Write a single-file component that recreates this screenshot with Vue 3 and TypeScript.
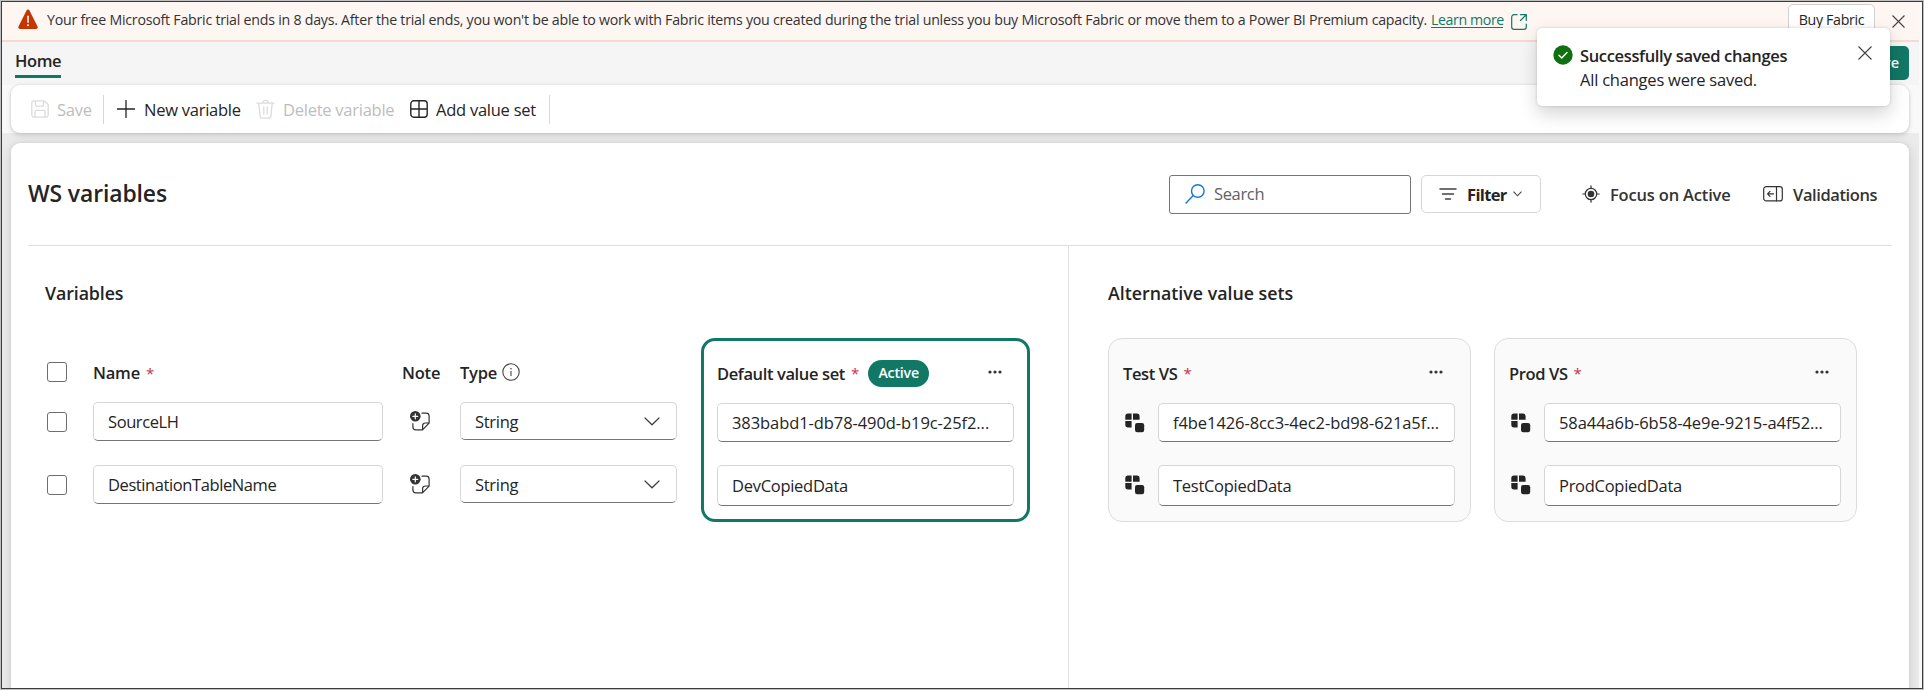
<script setup lang="ts">
import { ref } from 'vue'

interface Variable {
  name: string
  type: string
  value: string
}

interface ValueSet {
  title: string
  values: string[]
}

const search = ref('')

const variables: Variable[] = [
  { name: 'SourceLH', type: 'String', value: '383babd1-db78-490d-b19c-25f2...' },
  { name: 'DestinationTableName', type: 'String', value: 'DevCopiedData' },
]

const alternatives: ValueSet[] = [
  { title: 'Test VS', values: ['f4be1426-8cc3-4ec2-bd98-621a5f...', 'TestCopiedData'] },
  { title: 'Prod VS', values: ['58a44a6b-6b58-4e9e-9215-a4f52...', 'ProdCopiedData'] },
]

const isGuid = (value: string): boolean => value.includes('-')
</script>

<template>
  <div class="frame">
    <div class="window">
      <header class="banner">
        <svg class="warn" width="20" height="22" viewBox="0 0 20 22">
          <path d="M8.500 1.400a1.700 1.700 0 0 1 3 0l8 16.200a1.700 1.700 0 0 1-1.500 2.500H2a1.700 1.700 0 0 1-1.500-2.500z" fill="#c43501" />
          <path d="M10 7.200v6" stroke="#fff" stroke-width="1.500" stroke-linecap="round" />
          <circle cx="10" cy="16.200" r="1" fill="#fff" />
        </svg>
        <p class="banner-text">Your free Microsoft Fabric trial ends in 8 days. After the trial ends, you won't be able to work with Fabric items you created during the trial unless you buy Microsoft Fabric or move them to a Power BI Premium capacity.</p>
        <a class="learn">Learn more</a>
        <svg class="external" width="16" height="16" viewBox="0 0 16 16" fill="none" stroke="#117865" stroke-width="1.200" stroke-linecap="round">
          <path d="M6 .700H3A2.300 2.300 0 0 0 .700 3v10A2.300 2.300 0 0 0 3 15.300h10a2.300 2.300 0 0 0 2.300-2.300v-3M9.500.700h5.800v5.800M15 1 9.500 6.500" />
        </svg>
        <button class="buy">Buy Fabric</button>
        <svg class="banner-close" width="13" height="13" viewBox="0 0 13 13" stroke="#424242" stroke-width="1.100">
          <path d="m.5.5 12 12M12.500.5l-12 12" />
        </svg>
      </header>

      <nav class="tabs">
        <span class="tab">Home</span>
        <button class="share">Share</button>
      </nav>

      <div class="ribbon">
        <button class="tool save disabled">
          <svg width="18" height="18" viewBox="0 0 18 18" fill="none" stroke="currentColor" stroke-width="1.300">
            <path d="M3 .8h10.500L17.200 4.500V15a2.200 2.200 0 0 1-2.200 2.200H3A2.200 2.200 0 0 1 .8 15V3A2.200 2.200 0 0 1 3 .8ZM4.500.8v4.200c0 .8.400 1.200 1.200 1.200h5.600c.8 0 1.200-.4 1.200-1.200V.8M4 17v-5.500c0-.8.400-1.200 1.200-1.200h7.600c.8 0 1.200.4 1.200 1.200V17" />
          </svg>
          <span>Save</span>
        </button>
        <i class="sep"></i>
        <button class="tool create">
          <svg width="18" height="18" viewBox="0 0 18 18" stroke="#242424" stroke-width="1.300" stroke-linecap="round">
            <path d="M9 .5v17M.5 9h17" />
          </svg>
          <span>New variable</span>
        </button>
        <button class="tool delete disabled">
          <svg width="19" height="20" viewBox="0 0 19 20" fill="none" stroke="currentColor" stroke-width="1.300" stroke-linecap="round">
            <path d="M1 4.200h17M6.800 4a2.700 2.700 0 0 1 5.400 0M2.800 4.400l1.300 12.700a2.300 2.300 0 0 0 2.300 2.100h6.200a2.300 2.300 0 0 0 2.300-2.100l1.300-12.700M7.800 8v7M11.200 8v7" />
          </svg>
          <span>Delete variable</span>
        </button>
        <button class="tool add">
          <svg width="18" height="18" viewBox="0 0 18 18" fill="none" stroke="#242424" stroke-width="1.400">
            <rect x=".8" y=".8" width="16.400" height="16.400" rx="3" />
            <path d="M9 1v16M1 9h16" />
          </svg>
          <span>Add value set</span>
        </button>
        <i class="sep"></i>
      </div>

      <div class="stage">
        <main class="panel">
          <div class="panel-head">
            <h1>WS variables</h1>
            <label class="search">
              <svg width="20" height="20" viewBox="0 0 20 20" fill="none" stroke="#0f7bd4" stroke-width="1.400">
                <circle cx="12.800" cy="7" r="6.300" />
                <path d="M8.200 11.600.6 19.400" />
              </svg>
              <input v-model="search" type="text" placeholder="Search" />
            </label>
            <button class="filter">
              <svg width="18" height="12" viewBox="0 0 18 12" stroke="#424242" stroke-width="1.500" stroke-linecap="round">
                <path d="M1 1h16M3.500 6h11M6.500 11h5" />
              </svg>
              <span>Filter</span>
              <svg width="9" height="6" viewBox="0 0 9 6" fill="none" stroke="#424242" stroke-width="1.100">
                <path d="m.5.700 4 4.100 4-4.100" />
              </svg>
            </button>
            <button class="ghost focus">
              <svg width="18" height="18" viewBox="0 0 18 18" fill="none" stroke="#333" stroke-width="1.200" stroke-linecap="round">
                <circle cx="9" cy="9" r="5.700" />
                <circle cx="9" cy="9" r="3.300" fill="#333" stroke="none" />
                <path d="M9 .8v2.500M9 14.700v2.500M.8 9h2.500M14.700 9h2.500" />
              </svg>
              <span>Focus on Active</span>
            </button>
            <button class="ghost validations">
              <svg width="20" height="16" viewBox="0 0 20 16" fill="none" stroke="#333" stroke-width="1.200" stroke-linecap="round" stroke-linejoin="round">
                <rect x=".7" y=".7" width="18.600" height="14.200" rx="2.500" />
                <path d="M13.500.8v14M10.500 7.800H4.700M7 5.300 4.500 7.800 7 10.300" />
              </svg>
              <span>Validations</span>
            </button>
          </div>

          <div class="columns">
            <section class="left">
              <h2>Variables</h2>
              <div class="tables">
                <div class="grid">
                  <i class="check"></i>
                  <span class="label">Name<b class="star">*</b></span>
                  <span class="label note-label">Note</span>
                  <span class="label type-label">
                    Type
                    <svg width="18" height="18" viewBox="0 0 18 18" fill="none" stroke="#424242" stroke-width="1.100">
                      <circle cx="9" cy="9" r="8.200" />
                      <path d="M9 8v5" />
                      <circle cx="9" cy="5.700" r=".8" fill="#424242" stroke="none" />
                    </svg>
                  </span>
                  <template v-for="item in variables" :key="item.name">
                    <i class="check"></i>
                    <div class="field name">{{ item.name }}</div>
                    <svg class="note" width="20" height="20" viewBox="0 0 20 20" fill="none" stroke="#333" stroke-width="1.200" stroke-linecap="round" stroke-linejoin="round">
                      <circle cx="5.300" cy="5.300" r="5.300" fill="#333" stroke="none" />
                      <path d="M5.300 2.800v5M2.800 5.300h5" stroke="#fff" />
                      <path d="M12 2.200h4.200A2.900 2.900 0 0 1 19.100 5v7.200l-6.600 6.600H5.800A2.900 2.900 0 0 1 2.900 16v-3.300M19 12h-3.700a2.700 2.700 0 0 0-2.700 2.700v4" />
                    </svg>
                    <div class="field select">
                      {{ item.type }}
                      <svg width="16" height="9" viewBox="0 0 16 9" fill="none" stroke="#424242" stroke-width="1.200" stroke-linecap="round">
                        <path d="m1 1 7 6.800L15 1" />
                      </svg>
                    </div>
                  </template>
                </div>

                <article class="card active">
                  <div class="card-head">
                    <span class="card-title">Default value set</span>
                    <b class="star">*</b>
                    <span class="pill">Active</span>
                    <svg class="dots" width="14" height="4" viewBox="0 0 14 4" fill="#333">
                      <circle cx="2" cy="2" r="1.600" /><circle cx="7" cy="2" r="1.600" /><circle cx="12" cy="2" r="1.600" />
                    </svg>
                  </div>
                  <div v-for="item in variables" :key="item.name" class="card-row">
                    <div class="field" :class="{ guid: isGuid(item.value) }">{{ item.value }}</div>
                  </div>
                </article>
              </div>
            </section>

            <section class="right">
              <h2>Alternative value sets</h2>
              <div class="sets">
                <article v-for="set in alternatives" :key="set.title" class="card">
                  <div class="card-head">
                    <span class="card-title">{{ set.title }}</span>
                    <b class="star">*</b>
                    <svg class="dots" width="14" height="4" viewBox="0 0 14 4" fill="#333">
                      <circle cx="2" cy="2" r="1.600" /><circle cx="7" cy="2" r="1.600" /><circle cx="12" cy="2" r="1.600" />
                    </svg>
                  </div>
                  <div v-for="value in set.values" :key="value" class="card-row">
                    <svg width="20" height="20" viewBox="0 0 20 20" fill="#242424">
                      <path d="M3 .5h3.600v6.200H.3V3.200A2.700 2.700 0 0 1 3 .5ZM8 .5h3.900a2.700 2.700 0 0 1 2.700 2.700v3.500H8zM.3 8.100h6.300v6.300H3a2.700 2.700 0 0 1-2.700-2.700z" />
                      <rect x="10" y="10" width="9.200" height="9.200" rx="2.200" />
                    </svg>
                    <div class="field" :class="{ guid: isGuid(value) }">{{ value }}</div>
                  </div>
                </article>
              </div>
            </section>
          </div>
        </main>
      </div>

      <aside class="toast">
        <svg width="20" height="20" viewBox="0 0 20 20" fill="none">
          <circle cx="10" cy="10" r="9.700" fill="#107010" />
          <path d="m6 10.300 2.700 2.700 5.300-5.500" stroke="#fff" stroke-width="1.400" stroke-linecap="round" stroke-linejoin="round" />
        </svg>
        <div class="toast-body">
          <strong>Successfully saved changes</strong>
          <span>All changes were saved.</span>
        </div>
        <svg class="toast-close" width="14" height="14" viewBox="0 0 14 14" stroke="#424242" stroke-width="1.100">
          <path d="m.5.5 13 13M13.500.5l-13 13" />
        </svg>
      </aside>
    </div>
  </div>
</template>

<style>
html,
body {
  margin: 0;
  overflow: hidden;
}
</style>

<style scoped>
* {
  box-sizing: border-box;
}

.frame {
  width: 1924px;
  height: 690px;
  padding: 1px;
  background: #c0c0c0;
  color: #242424;
  font-family: 'Open Sans', 'Noto Sans', sans-serif;
  font-size: 16.5px;
  line-height: 24px;
}

.window {
  position: relative;
  display: flex;
  flex-direction: column;
  height: 688px;
  padding-right: 3px;
  border: 1px solid #3b3b3b;
  background: #f9f9f9;
  overflow: hidden;
}

button {
  display: flex;
  align-items: center;
  margin: 0;
  padding: 0;
  border: 0;
  background: none;
  color: inherit;
  font: inherit;
  white-space: nowrap;
}

svg {
  display: block;
  flex: none;
}

.banner {
  display: flex;
  align-items: flex-start;
  flex: none;
  height: 40px;
  border-bottom: 2px solid #f8d9cd;
  background: #fef6f3;
  font-size: 14.2px;
  line-height: 20px;
}

.warn {
  margin: 7px 9px 0 16px;
}

.banner-text {
  flex: none;
  width: 1384px;
  margin: 8px 0 0;
  color: #333;
  letter-spacing: -0.24px;
  white-space: nowrap;
}

.learn {
  width: 72px;
  height: 18px;
  margin: 8px 8px 0 0;
  border-bottom: 1px solid #117865;
  color: #117865;
  letter-spacing: -0.4px;
  line-height: 20px;
  white-space: nowrap;
}

.external {
  margin-top: 12px;
}

.buy {
  justify-content: center;
  width: 87px;
  height: 32px;
  margin: 2px 17px 0 261px;
  border: 1px solid #d1d1d1;
  border-radius: 5px;
  background: #fff;
  letter-spacing: -0.3px;
}

.banner-close {
  margin-top: 13px;
}

.tabs {
  display: flex;
  align-items: flex-start;
  justify-content: space-between;
  flex: none;
  height: 43px;
  padding: 4px 10px 0 13px;
  background: #f5f5f5;
}

.tab {
  width: 46px;
  height: 32px;
  padding-top: 3px;
  border-bottom: 3px solid #117865;
  font-weight: 600;
  letter-spacing: -0.4px;
  white-space: nowrap;
}

.share {
  justify-content: flex-end;
  width: 90px;
  height: 34px;
  padding-right: 10px;
  border-radius: 5px;
  background: #117865;
  color: #fff;
  font-size: 14.500px;
  font-weight: 600;
}

.ribbon {
  position: relative;
  z-index: 1;
  display: flex;
  align-items: center;
  flex: none;
  height: 48px;
  margin: 0 10px 0 9px;
  padding-left: 20px;
  border-radius: 9px;
  background: #fff;
  box-shadow: 0 2px 5px rgba(0, 0, 0, 0.16), 0 0 2px rgba(0, 0, 0, 0.12);
}

.tool {
  letter-spacing: -0.25px;
}

.tool svg {
  margin-right: 8px;
}

.tool span {
  padding-top: 1px;
}

.tool.save {
  width: 72px;
}

.tool.create {
  width: 139px;
  margin-left: 13px;
}

.tool.create svg {
  margin-right: 9px;
}

.tool.delete {
  width: 154px;
}

.tool.add {
  width: 139px;
}

.disabled {
  color: #bdbdbd;
}

.disabled svg {
  color: #dcdcdc;
}

.sep {
  width: 1px;
  height: 29px;
  background: #d8d8d8;
}

.stage {
  flex: 1;
  min-height: 0;
  padding: 10px 10px 0 9px;
  background: #ebebeb;
}

.panel {
  height: 560px;
  border-radius: 9px;
  background: #fff;
  box-shadow: 0 2px 12px rgba(0, 0, 0, 0.14), 0 0 2px rgba(0, 0, 0, 0.1);
}

.panel-head {
  display: flex;
  align-items: center;
  height: 103px;
  margin: 0 17px;
  border-bottom: 1px solid #e0e0e0;
}

h1 {
  width: 1141px;
  margin: 0;
  font-size: 22.900px;
  font-weight: 600;
  letter-spacing: -0.1px;
  line-height: 32px;
}

.search {
  display: flex;
  align-items: center;
  width: 242px;
  height: 39px;
  padding-left: 15px;
  border: 1px solid #767676;
  border-radius: 3px;
}

.search input {
  width: 180px;
  margin-left: 9px;
  padding: 0;
  border: 0;
  outline: 0;
  background: none;
  color: #616161;
  font: inherit;
  letter-spacing: -0.35px;
}

.search input::placeholder {
  color: #616161;
  opacity: 1;
}

.filter {
  width: 120px;
  height: 38px;
  margin-left: 10px;
  padding-left: 17px;
  border: 1px solid #d6d6d6;
  border-radius: 5px;
  font-weight: 700;
  letter-spacing: -0.65px;
}

.filter span {
  width: 38px;
  margin: 0 8px 0 10px;
  padding-top: 1px;
  text-align: left;
}

.ghost {
  font-weight: 600;
  color: #333;
  letter-spacing: -0.18px;
}

.ghost span {
  padding-top: 1px;
}

.focus {
  width: 181px;
  margin-left: 41px;
}

.ghost svg {
  margin-right: 10px;
}

.validations {
  letter-spacing: -0.4px;
}

.columns {
  display: flex;
  height: 457px;
}

.left {
  width: 1058px;
  padding: 35px 0 0 34px;
  border-right: 1px solid #e0e0e0;
}

.right {
  padding: 35px 0 0 39px;
}

h2 {
  margin: 0;
  font-size: 17.800px;
  font-weight: 600;
  line-height: 25px;
}

.left h2 {
  letter-spacing: -0.1px;
}

.tables {
  display: flex;
}

.grid {
  display: grid;
  grid-template-columns: 48px 309px 58px 217px;
  grid-template-rows: 13px 39px 39px;
  row-gap: 24px;
  align-items: center;
  align-content: start;
  width: 656px;
  height: 220px;
  padding-top: 59px;
}

.check {
  width: 20px;
  height: 20px;
  margin-left: 2px;
  border: 1px solid #6e6e6e;
  border-radius: 3px;
}

.label {
  padding-top: 2px;
  font-weight: 600;
  letter-spacing: -0.2px;
  white-space: nowrap;
}

.star {
  margin-left: 6px;
  color: #c4314b;
  font-size: 15px;
  font-weight: 400;
}

.type-label {
  display: flex;
  gap: 5px;
}

.type-label svg {
  margin-top: 2px;
}

.note {
  margin: -2px 0 0 8px;
}

.field {
  display: flex;
  align-items: center;
  width: 290px;
  height: 39px;
  padding: 1px 0 0 14px;
  border: 1px solid #d6d6d6;
  border-bottom-color: #767676;
  border-radius: 5px;
  background: #fff;
  letter-spacing: -0.28px;
  white-space: nowrap;
}

.field.name {
  letter-spacing: -0.41px;
}

.field.guid {
  letter-spacing: -0.08px;
}

.select {
  justify-content: space-between;
  align-self: start;
  width: 217px;
  height: 38px;
  padding-right: 16px;
}

.sets {
  display: flex;
  gap: 23px;
  margin-top: 32px;
}

.card {
  width: 363px;
  height: 184px;
  padding: 17px 15px 0 14px;
  border: 1px solid #dcdcdc;
  border-radius: 14px;
  background: #fafafa;
}

.card.active {
  width: 329px;
  margin-top: 32px;
  padding: 15px 13px 0;
  border: 3px solid #117865;
  background: #fff;
}

.card-head {
  display: flex;
  align-items: center;
  height: 34px;
  margin-bottom: 13px;
}

.card-title {
  padding-top: 1px;
  font-weight: 600;
  letter-spacing: -0.38px;
  white-space: nowrap;
}

.pill {
  width: 61px;
  height: 27px;
  margin: 0 0 0 9px;
  border-radius: 14px;
  background: #117865;
  color: #fff;
  font-size: 14.200px;
  font-weight: 600;
  letter-spacing: -0.2px;
  line-height: 26px;
  text-align: center;
}

.dots {
  margin: -2px 12px 0 auto;
}

.card-row {
  display: flex;
  align-items: center;
  justify-content: space-between;
  height: 39px;
  margin-bottom: 23px;
  padding-left: 2px;
}

.active .card-row {
  padding-left: 0;
}

.card-row .field {
  width: 297px;
}

.card-row:last-child {
  height: 41px;
}

.card-row:last-child .field {
  height: 41px;
  padding-top: 0;
}

.card-row:last-child svg {
  margin-top: -2px;
}

.toast {
  position: absolute;
  z-index: 3;
  top: 26px;
  right: 32px;
  display: flex;
  width: 353px;
  height: 78px;
  padding: 17px 17px 0 16px;
  border-radius: 5px;
  background: #fff;
  box-shadow: 0 8px 18px rgba(0, 0, 0, 0.17), 0 0 3px rgba(0, 0, 0, 0.16);
}

.toast-body {
  display: flex;
  flex-direction: column;
  width: 278px;
  margin: -1px 0 0 7px;
  letter-spacing: -0.22px;
  white-space: nowrap;
}

.toast-body strong {
  font-weight: 600;
  letter-spacing: -0.35px;
}

.toast-close {
  margin-top: 1px;
}
</style>
